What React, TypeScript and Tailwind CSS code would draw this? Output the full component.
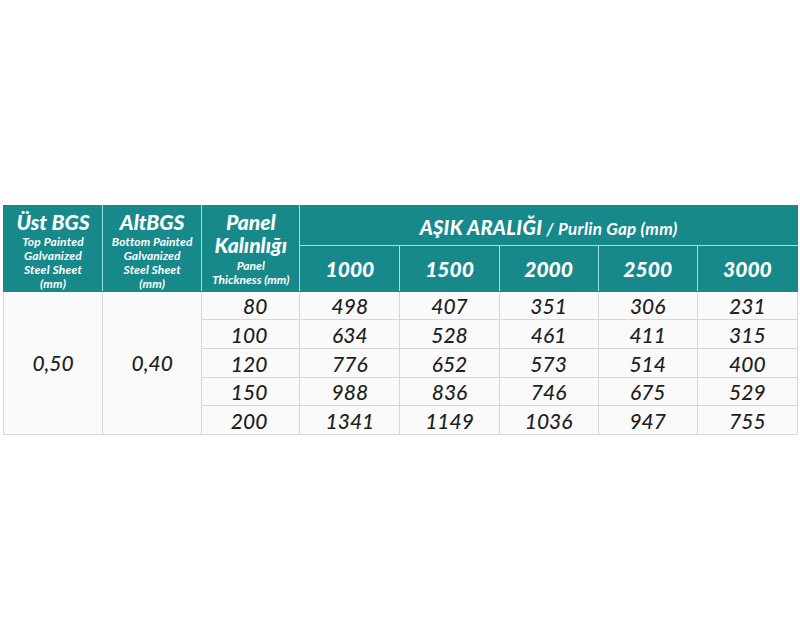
import React from "react";

const cols = ["1000", "1500", "2000", "2500", "3000"];
const rows: [string, string[]][] = [
  ["80", ["498", "407", "351", "306", "231"]],
  ["100", ["634", "528", "461", "411", "315"]],
  ["120", ["776", "652", "573", "514", "400"]],
  ["150", ["988", "836", "746", "675", "529"]],
  ["200", ["1341", "1149", "1036", "947", "755"]],
];
const rowH = ["h-[28px]", "h-[29px]", "h-[29px]", "h-[28px]", "h-[29px]"];

export default function App() {
  return (
    <div className="w-[800px] h-[640px] bg-white pt-[205px] pl-[3px]" style={{ fontFamily: "Lato, 'Open Sans', sans-serif" }}>
      <table className="border-collapse table-fixed w-[795px] italic text-[#1f1f1f]">
        <colgroup>
          <col className="w-[99px]" />
          <col className="w-[99px]" />
          <col className="w-[98px]" />
          <col className="w-[100px]" />
          <col className="w-[99px]" />
          <col className="w-[99px]" />
          <col className="w-[99px]" />
          <col className="w-[100px]" />
        </colgroup>
        <thead>
          <tr className="h-[40px]">
            <th rowSpan={2} className="bg-[#17898b] border border-[#17898b] border-r-[#9fe0e0] text-white align-top pt-[5px] leading-none">
              <div className="text-[21px] font-black leading-[22px]">Üst BGS</div>
              <div className="text-[12px] font-bold leading-[14px] mt-[2px] tracking-[0.2px]">Top Painted<br />Galvanized<br />Steel Sheet<br />(mm)</div>
            </th>
            <th rowSpan={2} className="bg-[#17898b] border border-[#17898b] border-r-[#9fe0e0] text-white align-top pt-[5px] leading-none">
              <div className="text-[21px] font-black leading-[22px]">AltBGS</div>
              <div className="text-[12px] font-bold leading-[14px] mt-[2px] tracking-[0.1px]">Bottom Painted<br />Galvanized<br />Steel Sheet<br />(mm)</div>
            </th>
            <th rowSpan={2} className="bg-[#17898b] border border-[#17898b] border-r-[#9fe0e0] text-white align-top pt-[4px] leading-none">
              <div className="text-[21px] font-black leading-[23px]">Panel</div>
              <div className="text-[21px] font-black leading-[23px]">Kalınlığı</div>
              <div className="text-[12px] font-bold leading-[14px] mt-[3px]">Panel<br />Thickness (mm)</div>
            </th>
            <th colSpan={5} className="bg-[#17898b] border border-[#17898b] border-b-[#9fe0e0] text-white pt-[2px]">
              <span className="text-[20px] font-black tracking-[0.3px]">AŞIK ARALIĞI</span>
              <span className="text-[17px] font-bold tracking-[0.3px]"> / Purlin Gap (mm)</span>
            </th>
          </tr>
          <tr className="h-[45px]">
            {cols.map((c, i) => (
              <th
                key={c}
                className={
                  "bg-[#17898b] border border-[#17898b] border-t-[#9fe0e0] text-white text-[21px] font-black " +
                  (i < 4 ? "border-r-[#9fe0e0]" : "")
                }
              >
                {c}
              </th>
            ))}
          </tr>
        </thead>
        <tbody className="bg-[#fafafa]">
          {rows.map(([t, vals], ri) => (
            <tr key={t} className={rowH[ri]}>
              {ri === 0 && (
                <>
                  <td rowSpan={5} className="border border-[#d6d6d6] text-center text-[21px] font-medium">0,50</td>
                  <td rowSpan={5} className="border border-[#d6d6d6] text-center text-[21px] font-medium">0,40</td>
                </>
              )}
              <td className="border border-[#d6d6d6] text-right pr-[32px] text-[21px] font-medium leading-none">{t}</td>
              {vals.map((v, i) => (
                <td key={i} className="border border-[#d6d6d6] text-center text-[21px] font-medium leading-none">
                  {v}
                </td>
              ))}
            </tr>
          ))}
        </tbody>
      </table>
    </div>
  );
}
